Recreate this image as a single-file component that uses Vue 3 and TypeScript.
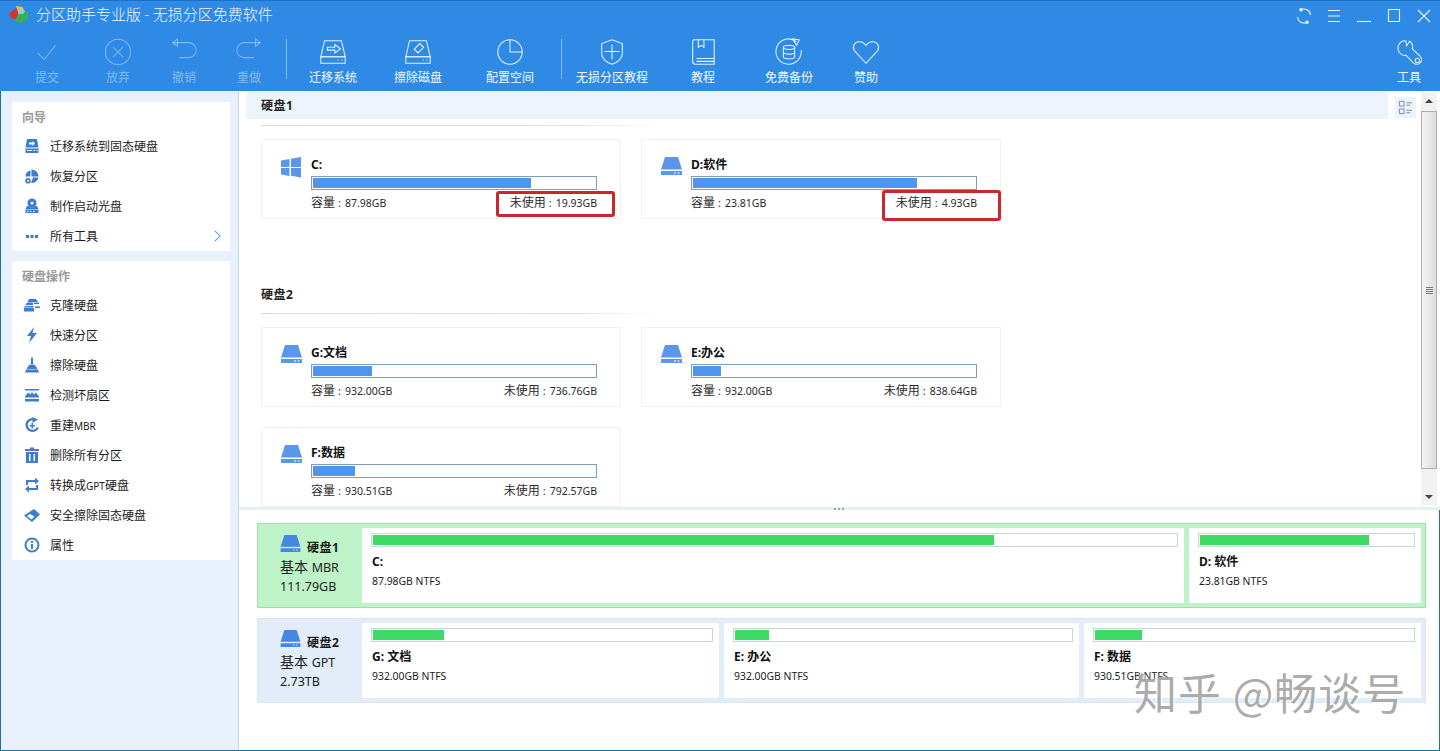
<script setup lang="ts">
type Tool = { label: string; w: number; off?: boolean; sep?: boolean; d: string[] }
type Part = { tag: string; name: string; cap: number; free: number; icon: string; boxed?: boolean }

const tools: Tool[] = [
  { label: '提交', w: 70, off: true, d: ['M6 17l7 7L25 9'] },
  { label: '放弃', w: 72, off: true, d: ['M16 2.5a13.5 13.5 0 1 0 0 27a13.5 13.5 0 1 0 0-27z', 'M10.5 10.5l11 11M21.5 10.5l-11 11'] },
  { label: '撤销', w: 60, off: true, d: ['M4 6h17a7.5 7.5 0 0 1 0 16H11', 'M9 2L4 6l5 4z'] },
  { label: '重做', w: 70, off: true, d: ['M28 6H11a7.5 7.5 0 0 0 0 16h10', 'M23 2l5 4-5 4z'] },
  { label: '', w: 5, sep: true, d: [] },
  { label: '迁移系统', w: 88, d: ['M7 4h18l4 17H3z', 'M3 21h26v7H3z', 'M10 11h8V8l6 4.5-6 4.5v-3h-8z', 'M21 24.500h1M25 24.500h1'] },
  { label: '擦除磁盘', w: 82, d: ['M7 4h18l4 17H3z', 'M3 21h26v7H3z', 'M12 13l6-6 4 4-6 6z', 'M21 24.500h1M25 24.500h1'] },
  { label: '配置空间', w: 102, d: ['M16 3a13 13 0 1 0 13 13H16z', 'M16 3a13 13 0 0 1 13 13'] },
  { label: '', w: 1, sep: true, d: [] },
  { label: '无损分区教程', w: 100, d: ['M16 3l11 4v10c0 6-5 10-11 12-6-2-11-6-11-12V7z', 'M16 8v16M8 15.500h16'] },
  { label: '教程', w: 82, d: ['M6 3h22v26H8a3 3 0 0 1-3-3V4z', 'M11 3v8l3-2 3 2V3', 'M9 23h19M9 26h19'] },
  { label: '免费备份', w: 90, d: ['M24 5a13.500 13.500 0 1 0 5 9', 'M20 2l7 1-3 6z', 'M10 11c0-3 12-3 12 0v10c0 3-12 3-12 0z', 'M10 11c0 3 12 3 12 0M10 16c0 3 12 3 12 0'] },
  { label: '赞助', w: 64, d: ['M16 28L4 15c-3-4-1-10 5-10 3 0 5 1 7 4 2-3 4-4 7-4 6 0 8 6 5 10z'] }
]

const guide = [
  { label: '迁移系统到固态硬盘', d: 'M3 1h10l1.500 8.500h-13zM5 4.500v2h3.500V8L11 5.500 8.500 3v1.500zM1.500 10.500h13V15h-13zM9.500 12v1h1.500v-1zM12 12v1h1.500v-1zM3 12v1h5v-1z' },
  { label: '恢复分区', d: 'M7.500 1.500v7h7a7 7 0 0 0-7-7zM6.500 2.500A6.500 6.500 0 0 0 1.500 8.500h4l1-1zM9 9.500h5.500A6.800 6.800 0 0 1 7 15zM4 10a2.800 2.800 0 1 0 0 5.600A2.800 2.800 0 1 0 4 10zm0 1.800a1 1 0 1 1 0 2 1 1 0 1 1 0-2z' },
  { label: '制作启动光盘', d: 'M8 0.500a4.500 4.500 0 1 1 0 9 4.500 4.500 0 1 1 0-9zM8 3.500a1.500 1.500 0 1 0 0 3 1.500 1.500 0 1 0 0-3zM3 8h1.500a5 5 0 0 0 7 0H13l1.500 3h-13zM1.500 11.500h13V15h-13zM3 13v1h1.500v-1zM6 13v1h1.500v-1zM9 13v1h1.500v-1z' },
  { label: '所有工具', d: 'M2 7h3v3H2zM6.500 7h3v3h-3zM11 7h3v3h-3z', more: true }
]
const ops = [
  { label: '克隆硬盘', d: 'M5 2h7l2 3H3.500zM3 5.500h6V8H1.500zM10 5.500h5V7h-5zM1 9h9l-1 1.500H0zM0 11h10v3.500H0zM11 9.500h5V11h-5z' },
  { label: '快速分区', d: 'M10 0L3 9h4l-2 7 8-10H8.500z' },
  { label: '擦除硬盘', d: 'M7 0.500h2V6l1 1.500H6L7 6zM5 8h6l2.500 4H2.500zM2 12.500h12l1 3H1z' },
  { label: '检测坏扇区', d: 'M1 2h14v1.500H1zM1 12h14v2.500H1zM1 9.500l3-4 2.500 2L8 5l2 2.500L12 5.500l3 4v1H1z' },
  { label: '重建MBR', d: 'M8.500 1a7 7 0 1 0 6.500 9.500h-2.500A4.700 4.700 0 1 1 8.500 3.300V6l5.500-3.500L8.500 0zM7.500 6v2H5.500v1.500h2v2H9v-2h2V8H9V6z' },
  { label: '删除所有分区', d: 'M6 0.500h4V2h5v2H1V2h5zM2 5h12v11H2zM5 7v7h1.500V7zM9.500 7v7H11V7z' },
  { label: '转换成GPT硬盘', d: 'M2 3h9V0.500L15 4l-4 3.500V5H4v3H2zM14 13H5v2.500L1 12l4-3.500V11h7V8h2z' },
  { label: '安全擦除固态硬盘', d: 'M10 2l6 5.500-8 7.500-8-6.500zM6 7l-3 2 4.500 3.500 3-3z' },
  { label: '属性', d: 'M8 0.500a7.500 7.500 0 1 1 0 15 7.500 7.500 0 1 1 0-15zM8 2.500a5.500 5.500 0 1 0 0 11 5.500 5.500 0 1 0 0-11zM7 4h2v2H7zM7 7h2v5H7z' }
]

const diskD = 'M4 0h13l4 12.500H0zM0 14h21v4H0zM13 15.500v1h2v-1zM16.500 15.500v1h2v-1z'
const winD = 'M0 3.500l8.500-1.500v8H0zM10 1.700L20 0v10H10zM0 11h8.500v8L0 17.500zM10 11h10v9.500l-10-1.700z'

const c: Part = { tag: 'C:', name: '', cap: 87.98, free: 19.93, icon: winD, boxed: true }
const d: Part = { tag: 'D:', name: '软件', cap: 23.81, free: 4.93, icon: diskD, boxed: true }
const g: Part = { tag: 'G:', name: '文档', cap: 932, free: 736.76, icon: diskD }
const e: Part = { tag: 'E:', name: '办公', cap: 932, free: 838.64, icon: diskD }
const f: Part = { tag: 'F:', name: '数据', cap: 930.51, free: 792.57, icon: diskD }

const sections = [
  { title: '硬盘1', active: true, parts: [c, d] },
  { title: '硬盘2', active: false, parts: [g, e, f] }
]
const rows = [
  { title: '硬盘1', kind: '基本', table: 'MBR', size: '111.79GB', on: true, parts: [{ p: c, w: 822 }, { p: d, w: 232 }] },
  { title: '硬盘2', kind: '基本', table: 'GPT', size: '2.73TB', on: false, parts: [{ p: g, w: 357 }, { p: e, w: 355 }, { p: f, w: 337 }] }
]

const usedPct = (p: Part) => `${((p.cap - p.free) / p.cap) * 100}%`
const gb = (n: number) => `${n.toFixed(2)}GB`
// latin runs in the menu labels are set smaller than the chinese around them
const chunks = (s: string) => s.split(/([A-Z]+)/).filter(Boolean)
const isLatin = (s: string) => /^[A-Z]+$/.test(s)
</script>

<template>
  <div class="win">
    <header class="top">
      <div class="titlebar">
        <svg class="logo" viewBox="0 0 22 20">
          <path d="M1 9l8-6 4 3-4 9-6-1z" fill="#d8352a" />
          <path d="M8 1l7 1 3 5-6 3z" fill="#e9c33a" />
          <path d="M12 8l9-1 0 8-8 4-6-2z" fill="#35b05a" />
          <path d="M10 5l6 0 1 4-6 1z" fill="#7fd0e8" />
        </svg>
        <span class="title">分区助手专业版 - 无损分区免费软件</span>
        <div class="controls">
          <svg viewBox="0 0 16 16"><path d="M5 1.800A6.500 6.500 0 0 1 14.500 7M1.500 9A6.500 6.500 0 0 0 11 14.200" /><circle cx="5" cy="1.800" r="1.200" fill="#fff" /><circle cx="11" cy="14.200" r="1.200" fill="#fff" /></svg>
          <svg viewBox="0 0 16 16"><path d="M2 2.500h12M2 8h12M2 13.500h12" /></svg>
          <svg viewBox="0 0 16 16"><path d="M1 13.500h14" /></svg>
          <svg viewBox="0 0 16 16"><path d="M2.500 1.500h11v12h-11z" /></svg>
          <svg viewBox="0 0 16 16"><path d="M2 2l12 12M14 2L2 14" /></svg>
        </div>
      </div>
      <nav class="toolbar">
        <template v-for="t in tools" :key="t.label + t.w">
          <div v-if="t.sep" class="tool-sep" :style="{ width: t.w + 'px' }"><i /></div>
          <div v-else class="tool" :class="{ off: t.off }" :style="{ width: t.w + 'px' }">
            <svg viewBox="0 0 32 32"><path v-for="p in t.d" :key="p" :d="p" /></svg>
            <span>{{ t.label }}</span>
          </div>
        </template>
        <div class="tool tool-last">
          <svg viewBox="0 0 32 32">
            <path d="M12.500 4C7.500 3.500 3.500 8 4.300 13c.7 4.500 4.700 7.500 8.700 6.500l7.500 8c2.500 2.500 6.500 2 8-.5 1.500-2.500 1-5-1-7l-8-7.500c1-3.500-.5-6.500-3-8l-3 5z" />
            <circle cx="25" cy="25" r="2.300" />
          </svg>
          <span>工具</span>
        </div>
      </nav>
    </header>

    <div class="body">
      <aside class="side">
        <section class="panel">
          <h3>向导</h3>
          <div v-for="g2 in guide" :key="g2.label" class="item">
            <svg viewBox="0 0 16 16"><path :d="g2.d" fill-rule="evenodd" /></svg>
            <span>{{ g2.label }}</span>
            <svg v-if="g2.more" class="chev" viewBox="0 0 8 14"><path d="M1 1l6 6-6 6" /></svg>
          </div>
        </section>
        <section class="panel">
          <h3>硬盘操作</h3>
          <div v-for="o in ops" :key="o.label" class="item">
            <svg viewBox="0 0 16 16"><path :d="o.d" fill-rule="evenodd" /></svg>
            <span><template v-for="ch in chunks(o.label)" :key="ch"><small v-if="isLatin(ch)">{{ ch }}</small><template v-else>{{ ch }}</template></template></span>
          </div>
        </section>
      </aside>

      <main class="main">
        <div class="upper">
          <div class="list">
            <section v-for="s in sections" :key="s.title" class="disk">
              <div class="disk-head">
                <div class="disk-bar" :class="{ active: s.active }">{{ s.title }}</div>
                <div v-if="s.active" class="toggle">
                  <svg viewBox="0 0 16 16"><path d="M1.500 1.500h5v5h-5zM1.500 9.500h5v5h-5zM9 3h6M9 5.500h4M9 11h6M9 13.500h4" /></svg>
                </div>
              </div>
              <div class="disk-line" />
              <div class="cards">
                <div v-for="p in s.parts" :key="p.tag" class="card">
                  <svg class="card-icon" viewBox="0 0 21 21"><path :d="p.icon" fill-rule="evenodd" /></svg>
                  <div class="card-body">
                    <div class="card-name">{{ p.tag }}{{ p.name }}</div>
                    <div class="card-bar"><i :style="{ width: usedPct(p) }" /></div>
                    <div class="card-info">
                      <span>容量<u>:</u><em>{{ gb(p.cap) }}</em></span>
                      <span>未使用<u>:</u><em>{{ gb(p.free) }}</em></span>
                    </div>
                  </div>
                  <div v-if="p.boxed" class="mark" :class="{ tall: p.tag === 'D:' }" />
                </div>
              </div>
            </section>
          </div>
          <div class="scroll">
            <div class="arrow up" />
            <div class="thumb"><i /></div>
            <div class="arrow down" />
          </div>
        </div>

        <div class="split"><span /></div>

        <div class="lower">
          <div v-for="r in rows" :key="r.title" class="row" :class="{ on: r.on }">
            <div class="row-head">
              <div class="row-title">
                <svg viewBox="0 0 21 18"><path :d="diskD" fill-rule="evenodd" /></svg>
                <b>{{ r.title }}</b>
              </div>
              <div class="row-kind">{{ r.kind }} <small>{{ r.table }}</small></div>
              <div class="row-size">{{ r.size }}</div>
            </div>
            <div class="row-parts">
              <div v-for="x in r.parts" :key="x.p.tag" class="part" :style="{ width: x.w + 'px' }">
                <div class="part-bar"><i :style="{ width: usedPct(x.p) }" /></div>
                <div class="part-name">{{ x.p.tag }} {{ x.p.name }}</div>
                <div class="part-info">{{ gb(x.p.cap) }} NTFS</div>
              </div>
            </div>
          </div>
        </div>
      </main>
    </div>

    <div class="watermark">知乎 @畅谈号</div>
  </div>
</template>

<style>
html, body { margin: 0; overflow: hidden; background: #fff; }
</style>

<style scoped>
.win {
  position: relative;
  width: 1440px;
  height: 751px;
  display: flex;
  flex-direction: column;
  overflow: hidden;
  box-sizing: border-box;
  border-bottom: 1px solid #1f6f9f;
  font: 12px "Noto Sans", "Noto Sans CJK SC", sans-serif;
  color: #222;
}
.top { height: 91px; flex: none; background: #2f8ae5; border-top: 1px solid #1b72c4; box-sizing: border-box; color: #fff; }
.titlebar { height: 29px; display: flex; align-items: center; padding-left: 8px; }
.logo { width: 21px; height: 19px; margin-right: 7px; margin-top: -3px; }
.title { font-size: 15px; line-height: 20px; margin-top: -4px; font-family: "Noto Sans CJK SC", sans-serif; font-weight: 300; color: #eef6ff; }
.controls { margin-left: auto; display: flex; gap: 14px; padding-right: 8px; }
.controls svg { width: 16px; height: 16px; fill: none; stroke: #e8f3ff; stroke-width: 1.100; }

.toolbar { display: flex; padding: 0 6px 0 12px; height: 61px; }
.tool { display: flex; flex-direction: column; align-items: center; }
.tool svg { width: 30px; height: 30px; margin-top: 7px; fill: none; stroke: #e6f2ff; stroke-width: 1.100; }
.tool span { margin-top: 2px; line-height: 17px; font-size: 12px; color: #f2f8ff; white-space: nowrap; }
.tool.off svg { stroke: rgba(255, 255, 255, .38); }
.tool.off span { color: rgba(255, 255, 255, .42); }
.tool-sep { display: flex; justify-content: center; }
.tool-sep i { width: 1px; height: 40px; margin-top: 9px; background: rgba(255, 255, 255, .4); }
.tool-last { margin-left: auto; width: 50px; }

.body { flex: 1; display: flex; min-height: 0; }
.side { width: 239px; flex: none; box-sizing: border-box; background: #e8f1fb; border-left: 1px solid #1f6f9f; border-right: 1px solid #c9d8e6; padding: 11px 8px 0 11px; display: flex; flex-direction: column; gap: 10px; }
.panel { background: #fff; }
.panel h3 { margin: 0; height: 29px; line-height: 31px; padding-left: 10px; font-size: 12px; font-weight: 700; color: #9a9a9a; }
.item { height: 30px; display: flex; align-items: center; padding: 0 9px 0 12px; color: #1c1c1c; }
.item svg { width: 16px; height: 16px; fill: #3f7ccc; flex: none; margin-right: 10px; }
.item small { font-size: 10px; }
.item .chev { width: 7px; height: 12px; margin: 0 0 0 auto; fill: none; stroke: #5b9bdc; stroke-width: 1.200; }

.main { flex: 1; display: flex; flex-direction: column; min-width: 0; }
.upper { height: 416px; flex: none; display: flex; overflow: hidden; }
.list { width: 1182px; flex: none; box-sizing: border-box; padding: 1px 5px 0 7px; }
.disk + .disk { margin-top: 62px; }
.disk-head { display: flex; gap: 7px; }
.disk-bar { flex: 1; height: 26px; line-height: 27px; padding-left: 15px; font-weight: 700; font-size: 12px; letter-spacing: .5px; color: #222; }
.disk-bar.active { height: 27px; background: #edf4fc; }
.toggle { width: 21px; height: 21px; margin-top: 5px; background: #edf3fa; display: flex; align-items: center; justify-content: center; }
.toggle svg { width: 15px; height: 15px; fill: none; stroke: #6d8db5; stroke-width: 1; }
.disk-line { height: 1px; margin: 6px 0 13px 15px; background: linear-gradient(90deg, #d5dde3 0, #dfe5ea 320px, #fff 400px); }
.cards { display: grid; grid-template-columns: 360px 360px; gap: 20px; padding-left: 15px; }
.card { position: relative; height: 80px; box-sizing: border-box; border: 1px solid #f0f2f4; display: flex; padding: 17px 0 0 19px; }
.card-icon { width: 21px; height: 21px; flex: none; fill: #5a97ea; margin-right: 9px; }
.card-body { width: 286px; }
.card-name { height: 19px; line-height: 16px; font-weight: 700; font-size: 12px; color: #111; }
.card-bar { height: 14px; box-sizing: border-box; border: 1px solid #7f9fb8; padding: 1px; }
.card-bar i { display: block; height: 100%; background: #4f94ef; }
.card-info { display: flex; justify-content: space-between; margin-top: 4px; line-height: 17px; font-size: 12px; color: #2a2a2a; }
.card-info u { text-decoration: none; margin: 0 4px 0 3px; font-size: 11px; }
.card-info em { font-style: normal; font-size: 10.500px; }
.mark { position: absolute; left: 234px; top: 51px; width: 119px; height: 26px; box-sizing: border-box; border: 3px solid #c9272b; border-radius: 3px; }
.mark.tall { left: 240px; top: 50px; height: 31px; }

.scroll { width: 16px; margin: 2px 0 2px 0; display: flex; flex-direction: column; background: #f1f1f1; }
.arrow { height: 16px; flex: none; position: relative; }
.arrow::after { content: ""; position: absolute; left: 4px; top: 6px; border: 4px solid transparent; border-top: 0; border-bottom: 4px solid #444; }
.arrow.down::after { border-bottom: 0; border-top: 4px solid #444; }
.thumb { height: 358px; margin-right: 0; margin-top: 2px; box-sizing: border-box; border: 1px solid #aeaeae; background: linear-gradient(90deg, #f4f4f4, #dcdcdc); display: flex; align-items: center; justify-content: center; }
.thumb i { width: 7px; height: 7px; background: repeating-linear-gradient(#777 0 1px, #eee 1px 2px); }
.arrow.down { margin-top: auto; }

.split { height: 3px; flex: none; background: #e8eff4; display: flex; justify-content: center; margin-left: 0; }
.split span { width: 12px; height: 2px; margin-top: 1px; background: repeating-linear-gradient(90deg, #9aa5ad 0 2px, transparent 2px 4px); }

.lower { flex: 1; padding: 13px 13px 0 18px; border-right: 1px solid #1f6f9f; }
.row { height: 85px; box-sizing: border-box; border: 1px solid #dbe6f3; background: #e3edfa; padding: 4px 4px 4px 0; display: flex; }
.row.on { background: #bdf3c6; border-color: #9fdcae; }
.row + .row { margin-top: 10px; }
.row-head { width: 104px; flex: none; box-sizing: border-box; padding: 6px 0 0 22px; }
.row-title { display: flex; align-items: center; gap: 6px; height: 18px; }
.row-title svg { width: 21px; height: 17px; fill: #4488e4; }
.row-title b { font-size: 12px; margin-top: 8px; letter-spacing: .5px; color: #1a1a1a; }
.row-kind { font-size: 14px; line-height: 20px; margin-top: 5px; color: #222; }
.row-kind small { font-size: 12.500px; }
.row-size { font-size: 12.500px; line-height: 18px; color: #222; }
.row-parts { flex: 1; display: flex; gap: 5px; }
.part { box-sizing: border-box; background: #fff; padding: 5px 6px 0 9px; }
.part-bar { height: 14px; box-sizing: border-box; border: 1px solid #c8d8d0; padding: 1px; }
.part-bar i { display: block; height: 100%; background: #3ddb66; }
.part-name { margin-top: 6px; padding-left: 1px; line-height: 18px; font-weight: 700; color: #111; }
.part-info { margin-top: 2px; padding-left: 1px; line-height: 17px; font-size: 10.400px; color: #222; }

.watermark { position: absolute; left: 1134px; top: 665px; font: 400 43px/52px "Noto Sans CJK SC", sans-serif; color: rgba(140, 140, 140, .72); text-shadow: 1px 1px 0 rgba(255, 255, 255, .7), 0 0 3px rgba(255, 255, 255, .8); white-space: nowrap; letter-spacing: 1px; }
</style>
